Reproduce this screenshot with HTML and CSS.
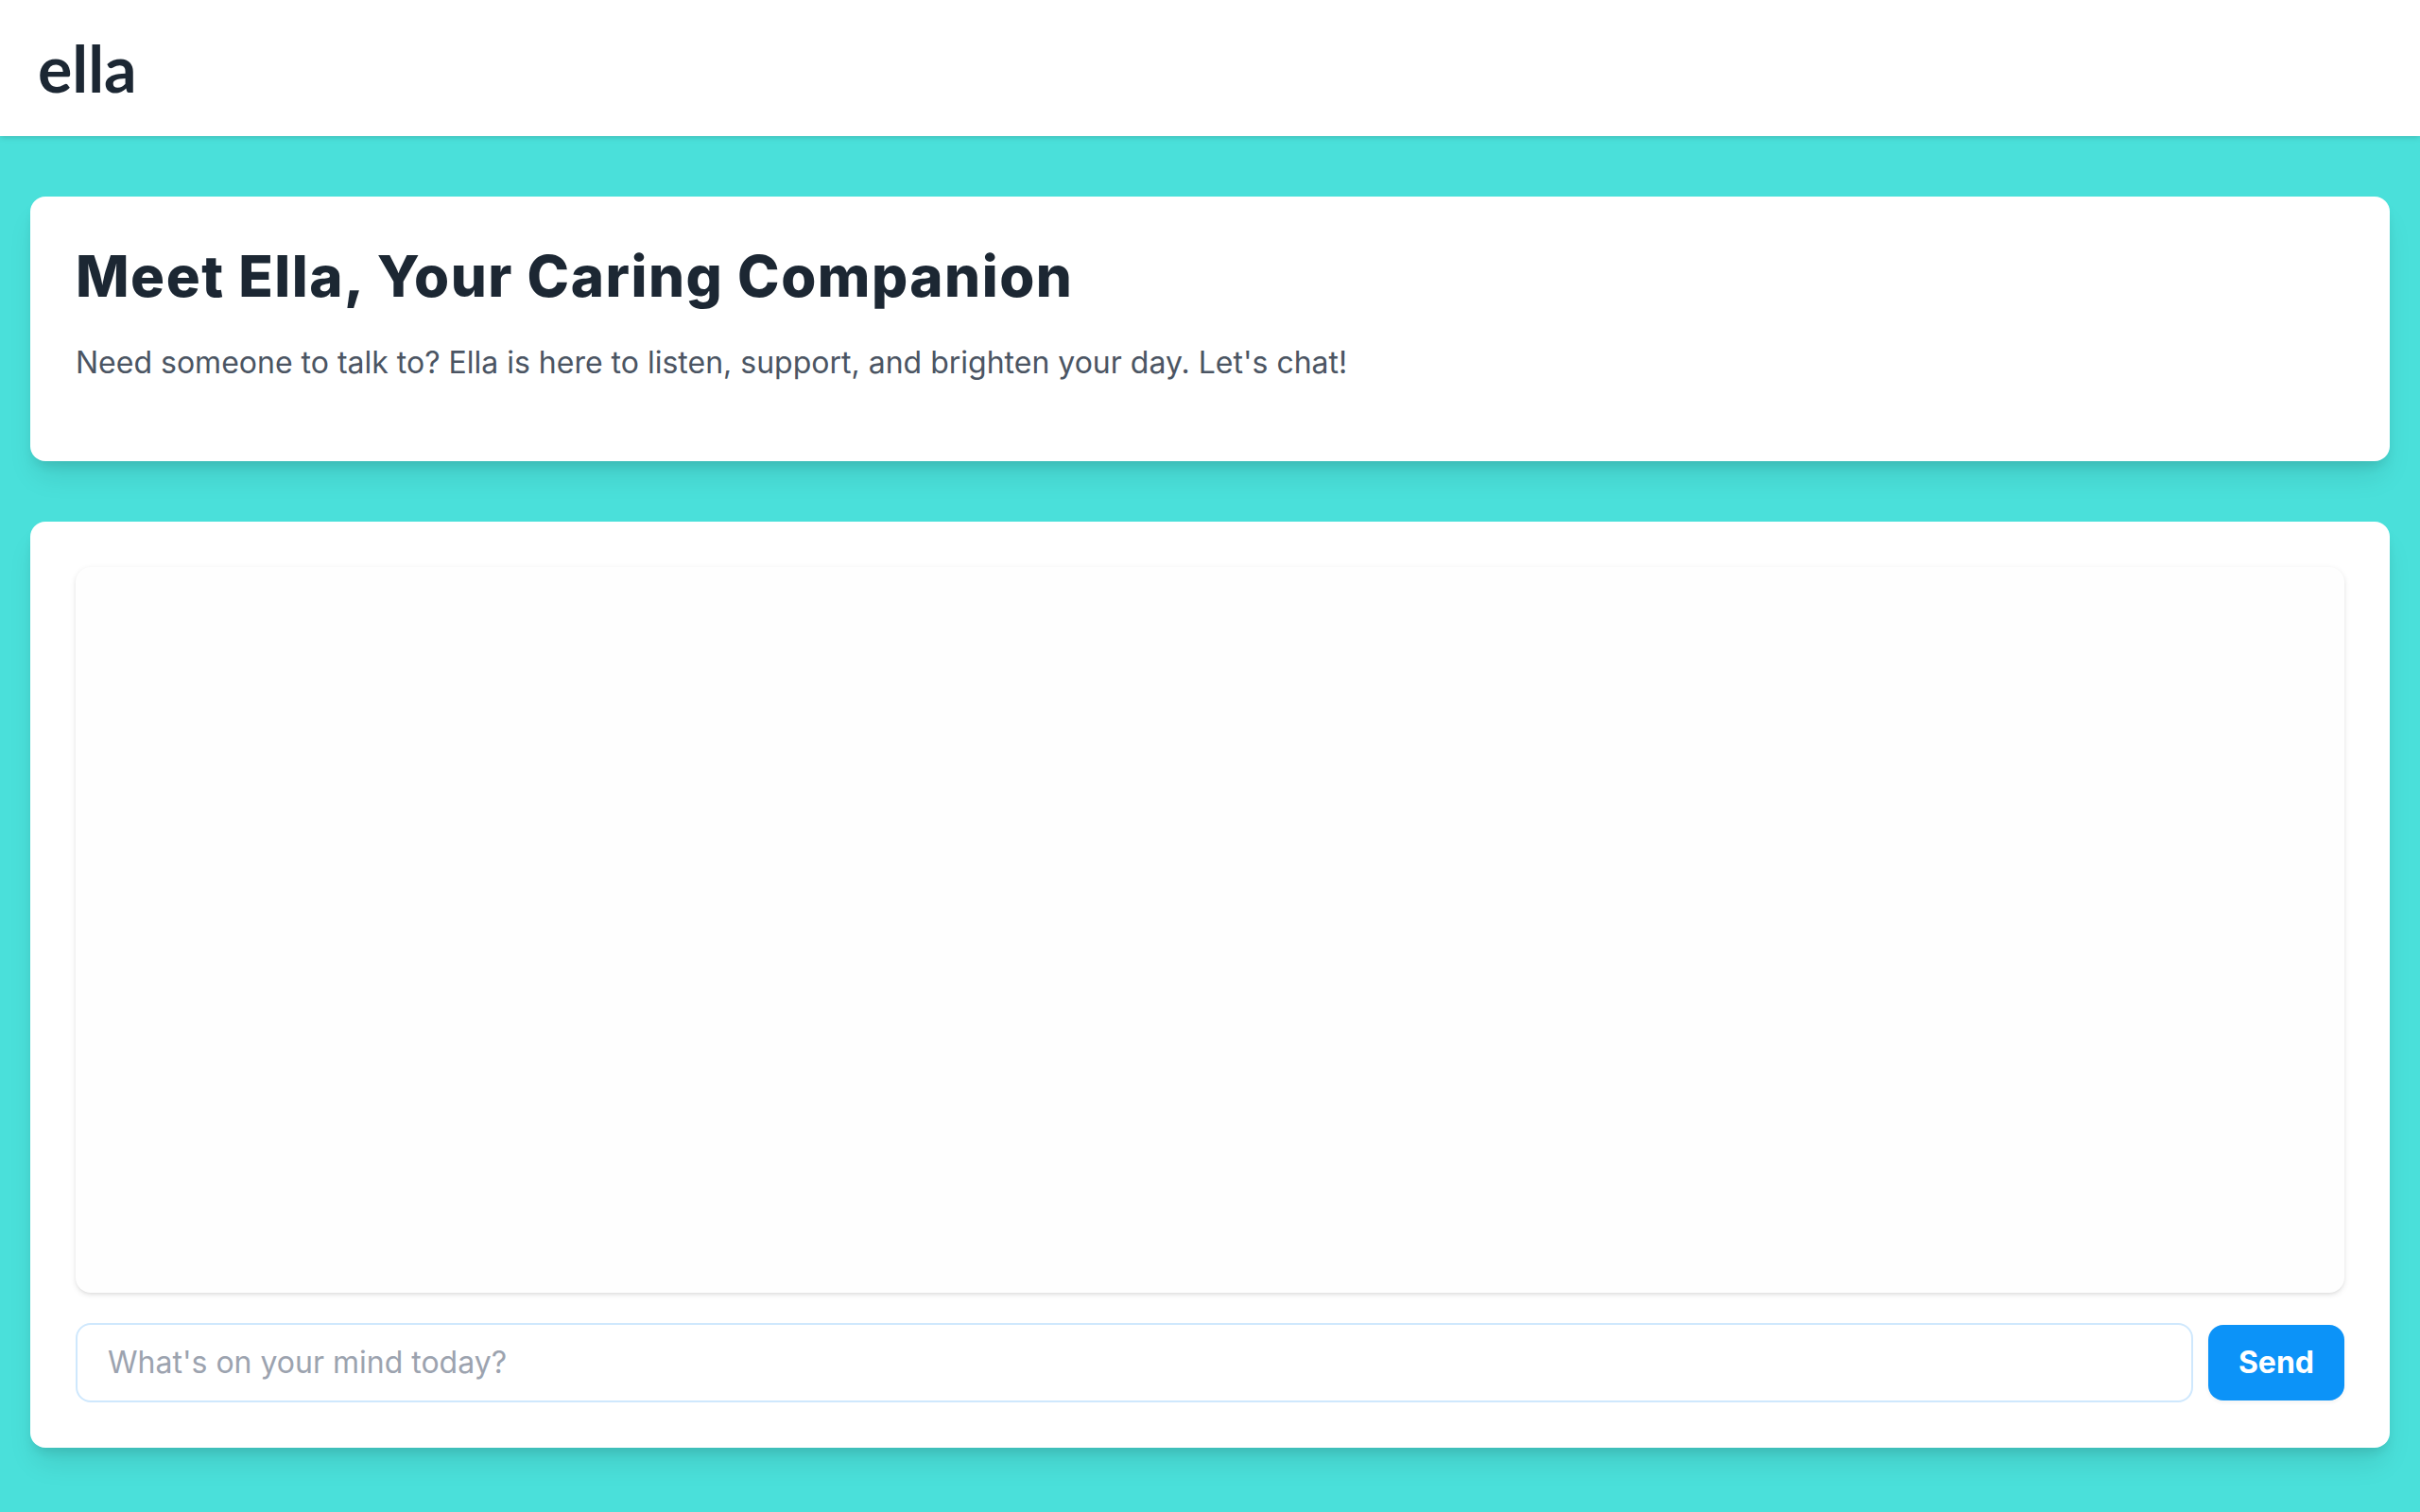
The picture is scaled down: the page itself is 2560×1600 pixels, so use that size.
FILE: index.html
```html
<!DOCTYPE html>
<html lang="en">
<head>
<meta charset="utf-8">
<meta name="viewport" content="width=device-width, initial-scale=1">
<title>Ella</title>
<link rel="stylesheet" href="styles.css">
</head>
<body>
<header class="site-header">
  <a class="logo" href="#">ella</a>
</header>
<main class="page">
  <section class="card">
    <h1 class="title">Meet Ella, Your Caring Companion</h1>
    <p class="lead">Need someone to talk to? Ella is here to listen, support, and brighten your day. Let's chat!</p>
  </section>
  <section class="card">
    <div class="messages"></div>
    <form class="composer">
      <input class="field" type="text" aria-label="Message" placeholder="What's on your mind today?">
      <button class="send" type="button">Send</button>
    </form>
  </section>
</main>
</body>
</html>
```
FILE: styles.css
```css
* {
  box-sizing: border-box;
}

body {
  margin: 0;
  min-height: 100vh;
  background: #4ae0da;
  color: #1f2937;
  font-family: Inter, "Liberation Sans", sans-serif;
  font-size: 32px;
  line-height: 48px;
}

.site-header {
  display: flex;
  align-items: center;
  padding: 36px 40px;
  background: #fff;
  box-shadow: 0 2px 6px rgba(0, 0, 0, 0.1), 0 2px 4px -2px rgba(0, 0, 0, 0.1);
}

.logo {
  color: #1c2733;
  font-family: Lato, sans-serif;
  font-size: 68px;
  font-weight: 700;
  line-height: 72px;
  text-decoration: none;
}

.page {
  display: flex;
  flex-direction: column;
  gap: 64px;
  padding: 64px 32px;
}

.card {
  padding: 48px;
  border-radius: 16px;
  background: #fff;
  box-shadow: 0 20px 30px -6px rgba(0, 0, 0, 0.1), 0 8px 12px -4px rgba(0, 0, 0, 0.1);
}

.title {
  margin: 0 0 32px;
  color: #1c2733;
  font-size: 60px;
  font-weight: 800;
  line-height: 72px;
  letter-spacing: 0.025em;
}

.lead {
  margin: 0 0 32px;
  color: #4b5563;
}

.messages {
  height: 48vh;
  border-radius: 16px;
  background: #fefefe;
  box-shadow: 0 2px 6px rgba(0, 0, 0, 0.1), 0 2px 4px -2px rgba(0, 0, 0, 0.1);
}

.composer {
  display: flex;
  align-items: center;
  gap: 16px;
  margin-top: 32px;
}

.field {
  flex: 1;
  min-width: 0;
  padding: 16px 32px;
  border: 2px solid #cfe8fd;
  border-radius: 16px;
  background: #fff;
  color: #1f2937;
  font: inherit;
}

.field::placeholder {
  color: #9ca3af;
  opacity: 1;
}

.send {
  padding: 16px 32px;
  border: 0;
  border-radius: 16px;
  background: #0c93f8;
  color: #fff;
  font: inherit;
  font-weight: 700;
  box-shadow: 0 2px 4px rgba(0, 0, 0, 0.05);
}
```
